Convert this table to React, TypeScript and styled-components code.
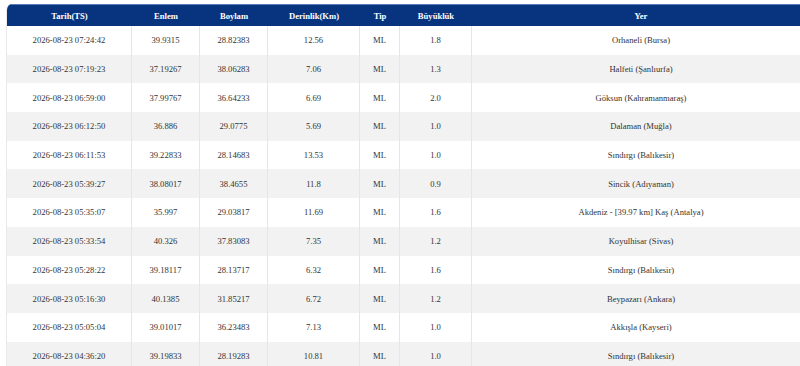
import styled, { createGlobalStyle } from "styled-components";

const GlobalStyle = createGlobalStyle`
  html, body {
    margin: 0;
    padding: 0;
    background: #ffffff;
    overflow: hidden;
  }
`;

type Quake = {
  date: string;
  lat: string;
  lon: string;
  depth: string;
  type: string;
  mag: string;
  place: string;
};

const quakes: Quake[] = [
  { date: "2026-08-23 07:24:42", lat: "39.9315", lon: "28.82383", depth: "12.56", type: "ML", mag: "1.8", place: "Orhaneli (Bursa)" },
  { date: "2026-08-23 07:19:23", lat: "37.19267", lon: "38.06283", depth: "7.06", type: "ML", mag: "1.3", place: "Halfeti (Şanlıurfa)" },
  { date: "2026-08-23 06:59:00", lat: "37.99767", lon: "36.64233", depth: "6.69", type: "ML", mag: "2.0", place: "Göksun (Kahramanmaraş)" },
  { date: "2026-08-23 06:12:50", lat: "36.886", lon: "29.0775", depth: "5.69", type: "ML", mag: "1.0", place: "Dalaman (Muğla)" },
  { date: "2026-08-23 06:11:53", lat: "39.22833", lon: "28.14683", depth: "13.53", type: "ML", mag: "1.0", place: "Sındırgı (Balıkesir)" },
  { date: "2026-08-23 05:39:27", lat: "38.08017", lon: "38.4655", depth: "11.8", type: "ML", mag: "0.9", place: "Sincik (Adıyaman)" },
  { date: "2026-08-23 05:35:07", lat: "35.997", lon: "29.03817", depth: "11.69", type: "ML", mag: "1.6", place: "Akdeniz - [39.97 km] Kaş (Antalya)" },
  { date: "2026-08-23 05:33:54", lat: "40.326", lon: "37.83083", depth: "7.35", type: "ML", mag: "1.2", place: "Koyulhisar (Sivas)" },
  { date: "2026-08-23 05:28:22", lat: "39.18117", lon: "28.13717", depth: "6.32", type: "ML", mag: "1.6", place: "Sındırgı (Balıkesir)" },
  { date: "2026-08-23 05:16:30", lat: "40.1385", lon: "31.85217", depth: "6.72", type: "ML", mag: "1.2", place: "Beypazarı (Ankara)" },
  { date: "2026-08-23 05:05:04", lat: "39.01017", lon: "36.23483", depth: "7.13", type: "ML", mag: "1.0", place: "Akkışla (Kayseri)" },
  { date: "2026-08-23 04:36:20", lat: "39.19833", lon: "28.19283", depth: "10.81", type: "ML", mag: "1.0", place: "Sındırgı (Balıkesir)" },
];

const columns = [
  { title: "Tarih(TS)", width: 125 },
  { title: "Enlem", width: 68 },
  { title: "Boylam", width: 68 },
  { title: "Derinlik(Km)", width: 92 },
  { title: "Tip", width: 40 },
  { title: "Büyüklük", width: 72 },
  { title: "Yer", width: 338 },
];

const App = () => {
  return (
    <>
      <GlobalStyle />
      <Page>
        <Table>
          <colgroup>
            {columns.map((c) => (
              <col key={c.title} style={{ width: c.width }} />
            ))}
          </colgroup>
          <thead>
            <tr>
              {columns.map((c) => (
                <HeadCell key={c.title}>{c.title}</HeadCell>
              ))}
            </tr>
          </thead>
          <tbody>
            {quakes.map((q, i) => (
              <Row key={i} $striped={i % 2 === 1}>
                <Cell>{q.date}</Cell>
                <Cell>{q.lat}</Cell>
                <Cell>{q.lon}</Cell>
                <Cell>{q.depth}</Cell>
                <Cell>{q.type}</Cell>
                <Cell>{q.mag}</Cell>
                <Cell $last>{q.place}</Cell>
              </Row>
            ))}
          </tbody>
        </Table>
      </Page>
    </>
  );
};

export default App;

const Page = styled.div`
  width: 820px;
  padding: 4px 0 0 6px;
`;

const Table = styled.table`
  width: 803px;
  table-layout: fixed;
  border-collapse: separate;
  border-spacing: 0;
  font-family: "Liberation Serif", "Times New Roman", serif;
  font-size: 8.6px;
  color: #333333;
  border-left: 1px solid #e9e9e9;
  border-radius: 6px 6px 0 0;
  overflow: hidden;
`;

const HeadCell = styled.th`
  height: 21px;
  padding: 0;
  background: #08347f;
  border-top: 1px solid #5a7bb5;
  color: #ffffff;
  font-weight: bold;
  text-align: center;
  vertical-align: middle;
`;

const Row = styled.tr<{ $striped: boolean }>`
  height: 28.7px;
  background: ${(p) => (p.$striped ? "#f2f2f2" : "#ffffff")};
`;

const Cell = styled.td<{ $last?: boolean }>`
  padding: 0;
  text-align: center;
  vertical-align: middle;
  border-right: ${(p) => (p.$last ? "none" : "1px solid #e6e6e6")};
`;
